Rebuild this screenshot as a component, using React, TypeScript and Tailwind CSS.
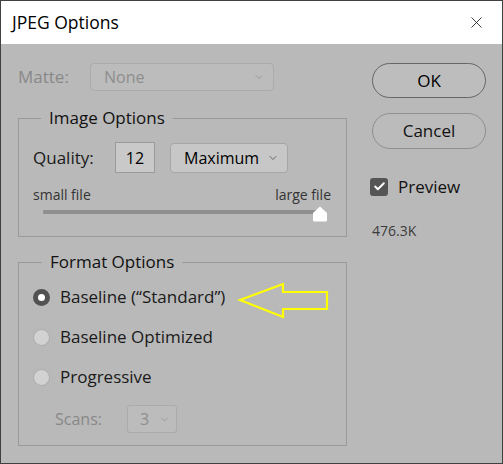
import { Check, ChevronDown, X } from 'lucide-react';

const font = { fontFamily: '"Open Sans", "Noto Sans", sans-serif' };

const Radio = ({ checked, label }: { checked?: boolean; label: string }) => (
  <div className="flex items-center h-[40px] gap-[10px]">
    {checked ? (
      <span className="w-[17px] h-[17px] rounded-full bg-[#525252] flex items-center justify-center">
        <span className="w-[7px] h-[7px] rounded-full bg-white" />
      </span>
    ) : (
      <span className="w-[17px] h-[17px] rounded-full bg-[#d2d2d2] border border-[#a9a9a9]" />
    )}
    <span className="text-[17px] text-[#1a1a1a]">{label}</span>
  </div>
);

const Arrow = () => (
  <svg className="absolute left-[236px] top-[279px]" width="96" height="42" viewBox="236 279 96 42">
    <polygon
      points="239,299 282,283 282,291 326,291 326,308 282,308 282,316"
      fill="none"
      stroke="#ffff00"
      strokeWidth="2.2"
      strokeLinejoin="miter"
    />
  </svg>
);

const App = () => {
  return (
    <div
      className="relative w-[503px] h-[464px] border border-[#404040] bg-[#b9b9b9] flex flex-col overflow-hidden"
      style={font}
    >
      {/* title bar */}
      <div className="h-[43px] bg-white flex items-center justify-between pl-[11px] pr-[16px]">
        <span className="text-[17.5px] text-black">JPEG Options</span>
        <X size={19} strokeWidth={1.1} className="text-[#222]" />
      </div>

      <div className="flex pl-[17px] pt-[19px]">
        {/* left column */}
        <div className="w-[329px] flex flex-col">
          <div className="flex items-center h-[28px]">
            <span className="w-[72px] text-[17px] text-[#888]">Matte:</span>
            <div className="w-[184px] h-[28px] rounded-[4px] border border-[#ababab] bg-[#bcbcbc] flex items-center justify-between pl-[13px] pr-[8px]">
              <span className="text-[16px] text-[#8e8e8e]">None</span>
              <ChevronDown size={12} className="text-[#9a9a9a]" />
            </div>
          </div>

          <fieldset className="mt-[15px] h-[131px] border border-[#999] px-[14px]">
            <legend className="ml-[8px] px-[8px] text-[17px] text-[#111] leading-[24px]">Image Options</legend>
            <div className="flex items-center mt-[12px]">
              <span className="w-[82px] text-[17px] text-[#1a1a1a]">Quality:</span>
              <div className="w-[40px] h-[31px] border border-[#9a9a9a] bg-[#c9c9c9] flex items-center justify-center text-[16px] text-black">
                12
              </div>
              <div className="ml-[15px] w-[118px] h-[30px] rounded-[4px] border border-[#a6a6a6] bg-[#c7c7c7] flex items-center justify-between pl-[13px] pr-[8px]">
                <span className="text-[16px] text-black">Maximum</span>
                <ChevronDown size={12} className="text-[#666]" />
              </div>
            </div>
            <div className="flex justify-between mt-[12px] pr-[1px] text-[14px] text-[#333] leading-[20px]">
              <span>small file</span>
              <span>large file</span>
            </div>
            <div className="relative ml-[10px] mr-[9px] mt-[5px] h-[4px] bg-[#8f8f8f] rounded-[1px]">
              <svg className="absolute right-[-5px] top-[-4px]" width="16" height="16" viewBox="0 0 16 16">
                <path d="M8 0.5 L15 7 V14 Q15 15.5 13.5 15.5 H2.5 Q1 15.5 1 14 V7 Z" fill="#fff" />
              </svg>
            </div>
          </fieldset>

          <fieldset className="mt-[13px] h-[196px] border border-[#999] px-[14px]">
            <legend className="ml-[9px] px-[8px] text-[17px] text-[#111] leading-[24px]">Format Options</legend>
            <div className="flex flex-col mt-[3px]">
              <Radio checked label={'Baseline (\u201CStandard\u201D)'} />
              <Radio label="Baseline Optimized" />
              <Radio label="Progressive" />
              <div className="flex items-center mt-[8px] pl-[22px]">
                <span className="w-[72px] text-[16px] text-[#888]">Scans:</span>
                <div className="w-[50px] h-[28px] rounded-[3px] border border-[#ababab] bg-[#bcbcbc] flex items-center justify-between pl-[12px] pr-[6px]">
                  <span className="text-[16px] text-[#8e8e8e]">3</span>
                  <ChevronDown size={11} className="text-[#9a9a9a]" />
                </div>
              </div>
            </div>
          </fieldset>
        </div>

        {/* right column */}
        <div className="ml-[25px] w-[114px] flex flex-col">
          <button className="h-[35px] rounded-full border border-[#666] bg-[#bdbdbd] text-[17px] text-black">OK</button>
          <button className="mt-[15px] h-[36px] rounded-full border border-[#8f8f8f] bg-[#bbbbbb] text-[17px] text-[#111]">
            Cancel
          </button>
          <div className="flex items-center mt-[25px] gap-[10px] -ml-[2px]">
            <span className="w-[18px] h-[18px] rounded-[3px] bg-[#555] flex items-center justify-center">
              <Check size={13} strokeWidth={3.5} className="text-white" />
            </span>
            <span className="text-[17px] text-[#111]">Preview</span>
          </div>
          <span className="mt-[20px] text-[14px] text-[#3c3c3c]">476.3K</span>
        </div>
      </div>

      <Arrow />
    </div>
  );
};

export default App;
